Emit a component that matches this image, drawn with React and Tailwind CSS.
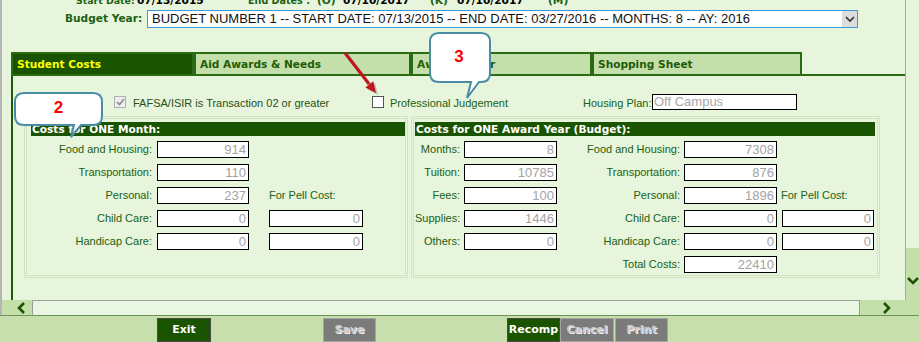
import React from 'react';

// Budget / student cost screen

const VERD = "font-['DejaVu_Sans',Verdana,sans-serif]";
const ARIAL = "font-['Liberation_Sans',Arial,sans-serif]";
const LABEL = 'text-[#215f12]';

const Field = ({ value, className = '' }) => (
  <div
    className={`h-[17px] border border-black bg-white text-right pr-[2px] text-[13px] leading-[15px] text-[#a3a3a3] ${ARIAL} ${className}`}
  >
    {value}
  </div>
);

const Label = ({ children, className = '' }) => (
  <div className={`text-right text-[11px] leading-[17px] whitespace-nowrap ${LABEL} ${ARIAL} ${className}`}>
    {children}
  </div>
);

const Header = ({ children }) => (
  <div className={`h-[14px] bg-[#1a5400] text-white font-bold text-[10.6px] leading-[14px] pl-[1px] whitespace-nowrap ${VERD}`}>
    {children}
  </div>
);

const monthRows = [
  ['Food and Housing:', '914'],
  ['Transportation:', '110'],
  ['Personal:', '237', 'pell'],
  ['Child Care:', '0', '0'],
  ['Handicap Care:', '0', '0'],
];

const yearRows = [
  ['Months:', '8', 'Food and Housing:', '7308'],
  ['Tuition:', '10785', 'Transportation:', '876'],
  ['Fees:', '100', 'Personal:', '1896', 'pell'],
  ['Supplies:', '1446', 'Child Care:', '0', '0'],
  ['Others:', '0', 'Handicap Care:', '0', '0'],
  [null, null, 'Total Costs:', '22410'],
];

const tabs = [
  { name: 'Student Costs', w: 'w-[183px]', active: true },
  { name: 'Aid Awards & Needs', w: 'w-[217px]' },
  { name: 'Award Letter', w: 'w-[181px]' },
  { name: 'Shopping Sheet', w: 'w-[210px]' },
];

const Chevron = ({ dir, className = '' }) => {
  const pts = {
    left: '7,1 2,6 7,11',
    right: '3,1 8,6 3,11',
    down: '1,3 6,8 11,3',
  }[dir];
  return (
    <svg width="12" height="12" viewBox="0 0 12 12" className={className}>
      <polyline points={pts} fill="none" stroke="#1a5400" strokeWidth="2.6" />
    </svg>
  );
};

const FooterButton = ({ children, on, className = '' }) => (
  <div
    className={`h-[24px] flex items-center justify-center font-bold text-[11px] ${VERD} ${
      on
        ? 'bg-[#1a5400] border border-[#4a4a4a] text-white'
        : 'bg-[#7b7b7b] border border-[#a4a4a4] text-[#c9c9c9] [text-shadow:1px_1px_0_#f2f2f2]'
    } ${className}`}
  >
    {children}
  </div>
);

export default function App() {
  return (
    <div className="relative w-[919px] h-[342px] overflow-hidden bg-[#e6f5dc] flex flex-col">
      {/* main scrolled area */}
      <div className="flex h-[302px]">
        <div className="w-[2px] bg-[#b6b6b6]" />
        <div className="w-[903px] flex flex-col overflow-hidden">
          {/* start / end dates (scrolled off top) */}
          <div className={`flex mt-[-6px] h-[13px] pl-[74px] font-bold text-[10.6px] leading-[13px] whitespace-nowrap ${VERD}`}>
            <span className={`w-[61px] text-[9.4px] ${LABEL}`}>Start Date:</span>
            <span className="w-[111px] text-black">07/13/2015</span>
            <span className={`w-[69px] text-[9.6px] ${LABEL}`}>End Dates :</span>
            <span className={`w-[26px] ${LABEL}`}>(O)</span>
            <span className="w-[87px] text-black">07/10/2017</span>
            <span className={`w-[27px] ${LABEL}`}>(K)</span>
            <span className="w-[91px] text-black">07/10/2017</span>
            <span className={LABEL}>(M)</span>
          </div>

          {/* budget year */}
          <div className="flex items-center mt-[3px] h-[18px]">
            <span className={`ml-[63px] w-[80px] font-bold text-[10.6px] ${VERD} ${LABEL}`}>Budget Year:</span>
            <div className="ml-[2px] w-[711px] h-[18px] border border-[#3d9ad8] bg-white flex items-center">
              <span className={`flex-1 pl-[4px] text-[13px] leading-[16px] text-[#111] whitespace-nowrap overflow-hidden ${ARIAL}`}>
                BUDGET NUMBER 1 -- START DATE: 07/13/2015 -- END DATE: 03/27/2016 -- MONTHS: 8 -- AY: 2016
              </span>
              <div className="w-[15px] h-[16px] bg-[#dcdcdc] flex items-center justify-center">
                <svg width="10" height="8" viewBox="0 0 10 8">
                  <polyline points="1,2 5,6 9,2" fill="none" stroke="#333" strokeWidth="1.6" />
                </svg>
              </div>
            </div>
          </div>

          {/* tabs */}
          <div className="flex mt-[24px] ml-[9px] h-[22px]">
            {tabs.map((t) => (
              <div
                key={t.name}
                className={`${t.w} border-2 border-b-0 border-[#2b6b14] pl-[4px] font-bold text-[10.6px] leading-[20px] whitespace-nowrap overflow-hidden ${VERD} ${
                  t.active ? 'bg-[#1a5400] text-[#ffff00]' : 'bg-[#c5dfab] text-[#1f5c06]'
                }`}
              >
                {t.name}
              </div>
            ))}
          </div>
          <div className="ml-[9px] h-[2px] bg-[#2b6b14]" />

          {/* tab panel */}
          <div className="ml-[9px] flex-1 border-l-2 border-[#1f5c08]">
            <div className={`flex items-center mt-[18px] h-[16px] text-[11px] whitespace-nowrap ${ARIAL} ${LABEL}`}>
              <div className="w-[359px] flex items-center pl-[101px]">
                <div className="w-[12px] h-[12px] border border-[#b2b2b2] bg-[#eeeeee] flex items-center justify-center">
                  <svg width="9" height="8" viewBox="0 0 9 8">
                    <polyline points="1,4 3.5,6.5 8,1" fill="none" stroke="#8c8c8c" strokeWidth="1.6" />
                  </svg>
                </div>
                <span className="ml-[7px] mt-[2px] text-[#2a4f1c]">FAFSA/ISIR is Transaction 02 or greater</span>
              </div>
              <div className="w-[211px] flex items-center">
                <div className="w-[12px] h-[12px] border border-[#555] bg-white" />
                <span className="ml-[6px] mt-[2px]">Professional Judgement</span>
              </div>
              <span className="w-[67px] mt-[2px]">Housing Plan:</span>
              <div className="ml-[2px] w-[145px] h-[16px] border border-black bg-white pl-[1px] text-[13px] leading-[14px] text-[#a8a8a8]">
                Off Campus
              </div>
            </div>

            <div className="flex gap-[3px] mt-[6px] ml-[11px]">
              {/* one month */}
              <div className="w-[384px] h-[162px] border-[3px] border-double border-[#cfe4bf] pt-[3px] pl-[4px]">
                <Header>Costs for ONE Month:</Header>
                <div className="flex flex-col gap-[6px] mt-[5px]">
                  {monthRows.map(([label, v, pell]) => (
                    <div key={label} className="flex h-[17px]">
                      <Label className="w-[121px]">{label}</Label>
                      <Field value={v} className="ml-[5px] w-[92px]" />
                      {pell === 'pell' && (
                        <Label className="ml-[20px] !text-left">For Pell Cost:</Label>
                      )}
                      {pell && pell !== 'pell' && <Field value={pell} className="ml-[20px] w-[94px]" />}
                    </div>
                  ))}
                </div>
              </div>

              {/* one award year */}
              <div className="w-[469px] h-[162px] border-[3px] border-double border-[#cfe4bf] pt-[3px] pl-[1px] pr-[2px]">
                <Header>Costs for ONE Award Year (Budget):</Header>
                <div className="flex flex-col gap-[6px] mt-[5px]">
                  {yearRows.map(([l1, v1, l2, v2, pell], i) => (
                    <div key={i} className="flex h-[17px]">
                      <Label className="w-[45px]">{l1}</Label>
                      {v1 !== null ? (
                        <Field value={v1} className="ml-[4px] w-[93px]" />
                      ) : (
                        <div className="ml-[4px] w-[93px]" />
                      )}
                      <Label className="w-[123px]">{l2}</Label>
                      <Field value={v2} className="ml-[4px] w-[93px]" />
                      {pell === 'pell' && <Label className="ml-[4px] !text-left">For Pell Cost:</Label>}
                      {pell && pell !== 'pell' && <Field value={pell} className="ml-[5px] w-[92px]" />}
                    </div>
                  ))}
                </div>
              </div>
            </div>
          </div>
        </div>
        <div className="w-px bg-[#a9a9a9]" />
        <div className="w-[13px] flex flex-col">
          <div className="flex-1" />
          <div className="h-[52px] bg-[#c5dfab] flex items-end justify-center pb-[13px]">
            <Chevron dir="down" />
          </div>
        </div>
      </div>

      {/* horizontal scrollbar */}
      <div className="flex h-[15px]">
        <div className="w-[2px] bg-[#b6b6b6]" />
        <div className="w-[30px] bg-[#c5dfab] flex items-center pl-[15px]">
          <Chevron dir="left" />
        </div>
        <div className="w-[828px] border border-b-0 border-[#9c9c9c] bg-[#e9f6e1]" />
        <div className="flex-1 bg-[#c5dfab] flex items-center pl-[21px]">
          <Chevron dir="right" />
        </div>
      </div>
      <div className="h-px bg-[#6c9359]" />

      {/* footer buttons */}
      <div className="flex-1 bg-[#c6dfad] flex items-start pt-[2px]">
        <FooterButton on className="ml-[157px] w-[54px]">Exit</FooterButton>
        <FooterButton className="ml-[112px] w-[53px]">Save</FooterButton>
        <FooterButton on className="ml-[131px] w-[53px]">Recomp</FooterButton>
        <FooterButton className="w-[54px]">Cancel</FooterButton>
        <FooterButton className="ml-[1px] w-[53px]">Print</FooterButton>
      </div>

      {/* annotation: red arrow */}
      <svg className="absolute left-[338px] top-[48px]" width="50" height="52" viewBox="0 0 50 52">
        <g opacity="0.3" transform="translate(2,2)">
          <line x1="7" y1="5" x2="31" y2="36" stroke="#555" strokeWidth="3" />
          <polygon points="38,45 27.3,39.4 35.3,33.2" fill="#555" />
        </g>
        <line x1="7" y1="5" x2="31" y2="36" stroke="#c3141b" strokeWidth="3" />
        <polygon points="38,45 27.3,39.4 35.3,33.2" fill="#c3141b" />
      </svg>

      {/* annotation: callout 2 */}
      <div className="absolute left-[14px] top-[92px] w-[92px] h-[48px]">
        <svg width="92" height="48" viewBox="0 0 92 48" className="absolute inset-0">
          <path
            d="M10,1 H79 Q88,1 88,10 V24 Q88,33 79,33 H67 L57,45 L60,33 H10 Q1,33 1,24 V10 Q1,1 10,1 Z"
            fill="white"
            stroke="#4a8ca3"
            strokeWidth="2"
          />
        </svg>
        <div className={`absolute left-0 top-[6px] w-[89px] text-center text-[17px] leading-[20px] font-bold text-[#ff0000] ${ARIAL}`}>2</div>
      </div>

      {/* annotation: callout 3 */}
      <div className="absolute left-[429px] top-[32px] w-[64px] h-[68px]">
        <svg width="64" height="68" viewBox="0 0 64 68" className="absolute inset-0">
          <path
            d="M9,1 H52 Q61,1 61,10 V41 Q61,50 52,50 H50 L38,66 L42,50 H10 Q1,50 1,41 V10 Q1,1 10,1 Z"
            fill="white"
            stroke="#4a8ca3"
            strokeWidth="2"
          />
        </svg>
        <div className={`absolute left-0 top-[15px] w-[60px] text-center text-[17px] leading-[20px] font-bold text-[#ff0000] ${ARIAL}`}>3</div>
      </div>
    </div>
  );
}
